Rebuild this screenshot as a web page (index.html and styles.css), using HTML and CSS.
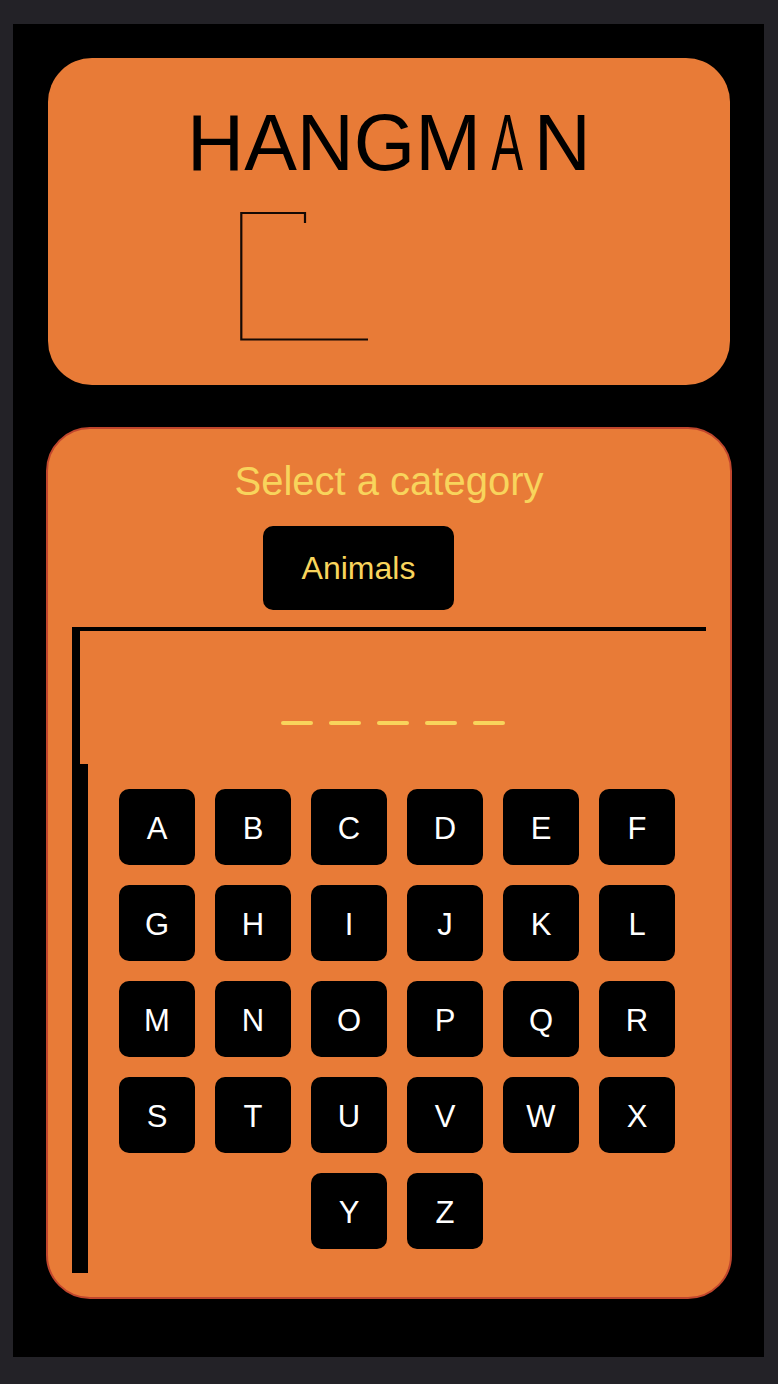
FILE: index.html
```html
<!DOCTYPE html>
<html lang="en">
<head>
<meta charset="utf-8">
<title>Hangman</title>
<link rel="stylesheet" href="styles.css">
</head>
<body>
<div class="frame">
  <section class="card top-card">
    <h1 class="title">HANGM<span class="squeeze">A</span>N</h1>
    <svg class="gallows" width="300" height="150" viewBox="0 0 300 150" xmlns="http://www.w3.org/2000/svg">
      <path d="M129 139.5 H2.3 V13 H66 V23" fill="none" stroke="#140904" stroke-width="2.2"/>
    </svg>
  </section>
  <section class="card game-card">
    <h2 class="prompt">Select a category</h2>
    <div class="categories">
      <button class="category">Animals</button>
    </div>
    <div class="word-area">
      <div class="dashes">
        <span class="dash"></span><span class="dash"></span><span class="dash"></span><span class="dash"></span><span class="dash"></span>
      </div>
    </div>
    <div class="keyboard">
      <div class="keys">
        <button class="key">A</button><button class="key">B</button><button class="key">C</button><button class="key">D</button><button class="key">E</button><button class="key">F</button>
        <button class="key">G</button><button class="key">H</button><button class="key">I</button><button class="key">J</button><button class="key">K</button><button class="key">L</button>
        <button class="key">M</button><button class="key">N</button><button class="key">O</button><button class="key">P</button><button class="key">Q</button><button class="key">R</button>
        <button class="key">S</button><button class="key">T</button><button class="key">U</button><button class="key">V</button><button class="key">W</button><button class="key">X</button>
        <button class="key">Y</button><button class="key">Z</button>
      </div>
    </div>
  </section>
</div>
</body>
</html>
```

FILE: styles.css
```css
* { box-sizing: border-box; }

html, body {
  margin: 0;
  padding: 0;
  background: #232227;
}

body {
  padding: 24px 14px 27px 13px;
  font-family: "Liberation Sans", Arial, Helvetica, sans-serif;
}

.frame {
  width: 751px;
  height: 1333px;
  background: #000;
  padding: 34px 34px 0 35px;
}

.card {
  background: #e87b37;
}

.top-card {
  border-radius: 44px;
  padding: 39px 0 34px;
  height: 327px;
}

.title {
  margin: 0;
  text-align: center;
  font-size: 79px;
  line-height: 92px;
  font-weight: normal;
  color: #000;
}

.squeeze {
  display: inline-block;
  transform: scaleX(0.6);
}

.gallows {
  display: block;
  margin: 11px auto 0;
}

.game-card {
  margin: 42px -2px 0;
  border: 2px solid #c0462d;
  border-radius: 44px;
  padding: 29px 24px 24px;
  height: 872px;
}

.prompt {
  margin: 0;
  text-align: center;
  font-size: 40px;
  line-height: 46px;
  font-weight: normal;
  color: #f8d45c;
}

.categories {
  display: flex;
  padding-left: 191px;
  margin-top: 22px;
}

.category {
  width: 191px;
  height: 84px;
  border: 0;
  border-radius: 10px;
  background: #000;
  color: #f8d45c;
  font-family: "Liberation Sans", Arial, Helvetica, sans-serif;
  font-size: 32px;
  padding: 0;
}

.word-area {
  margin-top: 17px;
  height: 137px;
  border-top: 4px solid #000;
  border-left: 8px solid #000;
  padding-top: 90px;
}

.dashes {
  display: flex;
  justify-content: center;
  gap: 16px;
}

.dash {
  width: 32px;
  height: 4px;
  border-radius: 2px;
  background: #f8d45c;
}

.keyboard {
  border-left: 16px solid #000;
  padding: 25px 0 24px;
}

.keys {
  width: 556px;
  margin: 0 auto;
  display: flex;
  flex-wrap: wrap;
  justify-content: center;
  gap: 20px;
}

.key {
  width: 76px;
  height: 76px;
  border: 0;
  border-radius: 10px;
  background: #000;
  color: #fff;
  font-family: "Liberation Sans", Arial, Helvetica, sans-serif;
  font-size: 31px;
  padding: 3px 0 0;
}
```
